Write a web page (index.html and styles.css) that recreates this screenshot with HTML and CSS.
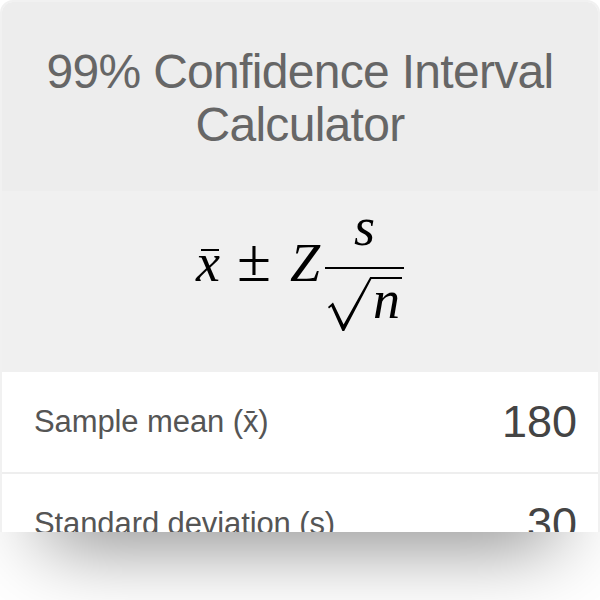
FILE: index.html
```html
<!DOCTYPE html>
<html lang="en">
<head>
<meta charset="utf-8">
<title>99% Confidence Interval Calculator</title>
<link rel="stylesheet" href="styles.css">
</head>
<body>
<div class="viewport">
  <div class="card">
    <header class="head">
      <h1 class="title">99% Confidence Interval Calculator</h1>
    </header>
    <div class="formula">
      <span class="mi xbar">x</span><span class="mo">±</span><span class="mi">Z</span><span class="frac"><span class="num mi">s</span><span class="rule"></span><span class="den"><svg class="radical" width="46" height="54" viewBox="0 0 46 54" aria-hidden="true"><path d="M1 30 L6 25.5 L16.6 47.5 L43.2 0 L46 0 L46 2 L44.4 2 L17.2 54 L15.4 54 L4.4 29.6 L2 31.6 Z" fill="#000"/></svg><span class="rad mi">n</span></span></span>
    </div>
    <div class="row">
      <span class="label">Sample mean (x̄)</span>
      <span class="value">180</span>
    </div>
    <div class="row">
      <span class="label">Standard deviation (s)</span>
      <span class="value">30</span>
    </div>
  </div>
</div>
<div class="fade"></div>
</body>
</html>
```
FILE: styles.css
```css
html, body {
  margin: 0;
  padding: 0;
  background: #ffffff;
}

body {
  width: 600px;
  font-family: "Liberation Sans", Arial, sans-serif;
}

.viewport {
  height: 532px;
  overflow: hidden;
}

.card {
  border: 2px solid #f1f1f1;
  border-bottom: none;
  border-radius: 13px 13px 0 0;
  overflow: hidden;
  background: #ffffff;
}

.head {
  background: #ededed;
  padding: 43px 20px 40px;
}

.title {
  margin: 0;
  font-weight: normal;
  font-size: 48px;
  line-height: 53px;
  letter-spacing: -0.7px;
  color: #666666;
  text-align: center;
}

.formula {
  background: #f0f0f0;
  height: 181px;
  box-sizing: border-box;
  padding-top: 9px;
  text-align: center;
  font-family: "Liberation Serif", "Times New Roman", serif;
  font-size: 54px;
  line-height: 54px;
  color: #000000;
  white-space: nowrap;
}

.mi {
  font-style: italic;
}

.mo {
  display: inline-block;
  margin: 0 19px 0 17px;
  font-size: 62px;
}

.xbar {
  position: relative;
  display: inline-block;
}

.xbar::after {
  content: "";
  position: absolute;
  left: 5px;
  width: 18px;
  top: 13px;
  border-top: 2px solid #000000;
}

.frac {
  display: inline-flex;
  flex-direction: column;
  align-items: center;
  vertical-align: 36px;
  margin-left: 5px;
}

.num {
  display: block;
  line-height: 54px;
  margin-bottom: 13px;
}

.rule {
  display: block;
  align-self: stretch;
  border-top: 2px solid #000000;
}

.den {
  display: flex;
  align-items: flex-start;
  margin-top: 8px;
  padding: 0 2px;
}

.radical {
  display: block;
  flex: none;
}

.rad {
  display: block;
  border-top: 2px solid #000000;
  line-height: 42px;
  padding-right: 2px;
}

.row {
  display: flex;
  align-items: center;
  justify-content: space-between;
  height: 100px;
  padding: 0 21px 0 32px;
  border-bottom: 2px solid #eeeeee;
  background: #ffffff;
}

.label {
  font-size: 31px;
  color: #555555;
  letter-spacing: -0.1px;
}

.value {
  font-size: 45px;
  color: #444444;
}

.fade {
  position: relative;
  height: 68px;
  overflow: hidden;
  background: #ffffff;
}

.fade::before {
  content: "";
  position: absolute;
  left: 55px;
  right: 55px;
  top: -60px;
  height: 60px;
  box-shadow: 0 0 80px 10px rgba(0, 0, 0, 0.5);
}
```
